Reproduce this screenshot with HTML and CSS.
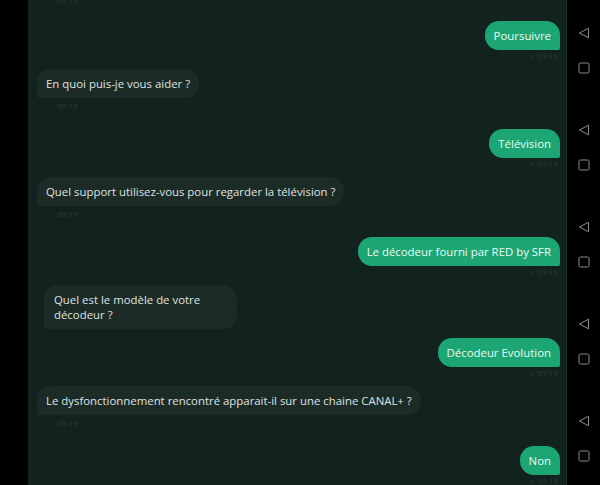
FILE: index.html
```html
<!DOCTYPE html>
<html lang="fr">
<head>
    <meta charset="UTF-8">
    <meta name="viewport" content="width=device-width, initial-scale=1.0">
    <title>Chat</title>
    <link rel="stylesheet" href="styles.css">
</head>
<body>
    <div class="screen">
        <div class="side-left"></div>

        <main class="chat">
            <div class="meta meta-in meta-top">09:19</div>

            <div class="msg msg-out">
                <div class="bubble">Poursuivre</div>
                <div class="meta meta-out">&#10003; 09:19</div>
            </div>

            <div class="msg msg-in">
                <div class="bubble">En quoi puis-je vous aider ?</div>
                <div class="meta meta-in">09:19</div>
            </div>

            <div class="msg msg-out">
                <div class="bubble">Télévision</div>
                <div class="meta meta-out">&#10003; 09:19</div>
            </div>

            <div class="msg msg-in">
                <div class="bubble">Quel support utilisez-vous pour regarder la télévision ?</div>
                <div class="meta meta-in">09:19</div>
            </div>

            <div class="msg msg-out">
                <div class="bubble">Le décodeur fourni par RED by SFR</div>
                <div class="meta meta-out">&#10003; 09:19</div>
            </div>

            <div class="msg msg-in no-meta shifted">
                <div class="bubble">Quel est le modèle de votre<br>décodeur ?</div>
            </div>

            <div class="msg msg-out">
                <div class="bubble">Décodeur Evolution</div>
                <div class="meta meta-out">&#10003; 09:19</div>
            </div>

            <div class="msg msg-in">
                <div class="bubble">Le dysfonctionnement rencontré apparait-il sur une chaine CANAL+ ?</div>
                <div class="meta meta-in">09:19</div>
            </div>

            <div class="msg msg-out">
                <div class="bubble">Non</div>
                <div class="meta meta-out">&#10003; 09:19</div>
            </div>
        </main>

        <nav class="side-nav">
            <div class="nav-group">
                <svg class="nav-back" width="12" height="12" viewBox="0 0 12 12"><path d="M10.5 1.2 L1.5 6 L10.5 10.8 Z" fill="none" stroke="#8c8c8c" stroke-width="1" stroke-linejoin="round"/></svg>
                <svg class="nav-home" width="12" height="12" viewBox="0 0 12 12"><rect x="1" y="1" width="10" height="10" rx="1.5" fill="none" stroke="#8c8c8c" stroke-width="1"/></svg>
            </div>
            <div class="nav-group">
                <svg class="nav-back" width="12" height="12" viewBox="0 0 12 12"><path d="M10.5 1.2 L1.5 6 L10.5 10.8 Z" fill="none" stroke="#8c8c8c" stroke-width="1" stroke-linejoin="round"/></svg>
                <svg class="nav-home" width="12" height="12" viewBox="0 0 12 12"><rect x="1" y="1" width="10" height="10" rx="1.5" fill="none" stroke="#8c8c8c" stroke-width="1"/></svg>
            </div>
            <div class="nav-group">
                <svg class="nav-back" width="12" height="12" viewBox="0 0 12 12"><path d="M10.5 1.2 L1.5 6 L10.5 10.8 Z" fill="none" stroke="#8c8c8c" stroke-width="1" stroke-linejoin="round"/></svg>
                <svg class="nav-home" width="12" height="12" viewBox="0 0 12 12"><rect x="1" y="1" width="10" height="10" rx="1.5" fill="none" stroke="#8c8c8c" stroke-width="1"/></svg>
            </div>
            <div class="nav-group">
                <svg class="nav-back" width="12" height="12" viewBox="0 0 12 12"><path d="M10.5 1.2 L1.5 6 L10.5 10.8 Z" fill="none" stroke="#8c8c8c" stroke-width="1" stroke-linejoin="round"/></svg>
                <svg class="nav-home" width="12" height="12" viewBox="0 0 12 12"><rect x="1" y="1" width="10" height="10" rx="1.5" fill="none" stroke="#8c8c8c" stroke-width="1"/></svg>
            </div>
            <div class="nav-group">
                <svg class="nav-back" width="12" height="12" viewBox="0 0 12 12"><path d="M10.5 1.2 L1.5 6 L10.5 10.8 Z" fill="none" stroke="#8c8c8c" stroke-width="1" stroke-linejoin="round"/></svg>
                <svg class="nav-home" width="12" height="12" viewBox="0 0 12 12"><rect x="1" y="1" width="10" height="10" rx="1.5" fill="none" stroke="#8c8c8c" stroke-width="1"/></svg>
            </div>
        </nav>
    </div>
</body>
</html>
```

FILE: styles.css
```css
/* Reset and Base Styles */
* {
    margin: 0;
    padding: 0;
    box-sizing: border-box;
}

body {
    font-family: "Open Sans", "DejaVu Sans", sans-serif;
    background-color: #000;
    width: 600px;
    height: 485px;
    overflow: hidden;
}

.screen {
    display: flex;
    height: 485px;
}

.side-left {
    width: 28px;
    background-color: #000;
}

/* Chat Styles */
.chat {
    width: 539px;
    background-color: #12221e;
    border-right: 1px solid #173029;
    display: flex;
    flex-direction: column;
    padding: 0 6px 0 9px;
    overflow: hidden;
}

.msg {
    display: flex;
    flex-direction: column;
}

.msg-out {
    align-items: flex-end;
    margin-bottom: 7px;
}

.msg-in {
    align-items: flex-start;
    margin-bottom: 15px;
}

.msg-in.no-meta {
    margin-bottom: 9px;
}

.msg-in.shifted {
    padding-left: 7px;
}

.bubble {
    font-size: 11.4px;
    line-height: 15px;
    padding: 7px 9px;
    border-radius: 14px;
}

.msg-out .bubble {
    background-color: #1ba674;
    color: #eefaf4;
    border-bottom-right-radius: 2px;
}

.msg-in .bubble {
    background-color: #1d2b27;
    color: #dde4e1;
    border-bottom-left-radius: 2px;
}

.msg-in.no-meta .bubble {
    width: 193px;
    padding: 7px 10px;
}

.meta {
    font-size: 8px;
    color: #2c3d38;
}

.meta-out {
    height: 12px;
    line-height: 12px;
    padding-right: 2px;
}

.meta-in {
    height: 16px;
    line-height: 16px;
    padding-left: 20px;
}

.meta-top {
    margin-top: -8px;
    margin-bottom: 13px;
}

/* Navigation Bar */
.side-nav {
    flex: 1;
    background-color: #000;
    display: flex;
    flex-direction: column;
}

.nav-group {
    height: 99px;
    display: flex;
    flex-direction: column;
    align-items: center;
    padding-top: 27px;
    gap: 23px;
}
```
